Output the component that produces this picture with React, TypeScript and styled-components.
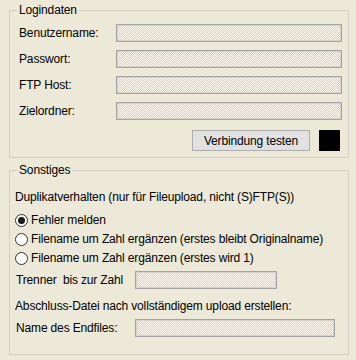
import styled, { createGlobalStyle } from 'styled-components';

const GlobalStyle = createGlobalStyle`
  html, body {
    margin: 0;
    background: #ece9d8;
  }
  body {
    font-family: 'Liberation Sans', Arial, sans-serif;
    font-size: 12px;
    letter-spacing: -0.15px;
    color: #000;
  }
`;

const App = () => {
  return (
    <>
      <GlobalStyle />
      <Page>
        <Group>
          <Legend>Logindaten</Legend>
          <FormGrid>
            <Label>Benutzername:</Label>
            <TextField />
            <Label>Passwort:</Label>
            <TextField type='password' />
            <Label>FTP Host:</Label>
            <TextField />
            <Label>Zielordner:</Label>
            <TextField />
          </FormGrid>
          <ButtonRow>
            <Button type='button'>Verbindung testen</Button>
            <StatusBox />
          </ButtonRow>
        </Group>

        <Group $tight>
          <Legend $shift>Sonstiges</Legend>
          <Text>Duplikatverhalten (nur für Fileupload, nicht (S)FTP(S))</Text>
          <RadioList>
            <RadioRow>
              <Radio $checked />
              Fehler melden
            </RadioRow>
            <RadioRow>
              <Radio />
              Filename um Zahl ergänzen (erstes bleibt Originalname)
            </RadioRow>
            <RadioRow>
              <Radio />
              Filename um Zahl ergänzen (erstes wird 1)
            </RadioRow>
          </RadioList>
          <FieldRow>
            <RowLabel>Trenner  bis zur Zahl</RowLabel>
            <TextField $width={142} />
          </FieldRow>
          <Text $gap={9}>Abschluss-Datei nach vollständigem upload erstellen:</Text>
          <FieldRow>
            <RowLabel>Name des Endfiles:</RowLabel>
            <TextField $width={200} />
          </FieldRow>
        </Group>
      </Page>
    </>
  );
};

export default App;

const Page = styled.div`
  width: 340px;
  padding: 3px 0 0 9px;
  display: flex;
  flex-direction: column;
  gap: 5px;
`;

const Group = styled.fieldset<{ $tight?: boolean }>`
  margin: 0;
  border: 1px solid #d2d0c6;
  padding: ${(p) => (p.$tight ? '0 6px 17px 5px' : '0 6px 6px 9px')};
  min-width: 0;
`;

const Legend = styled.legend<{ $shift?: boolean }>`
  padding: 0 2px;
  margin-left: ${(p) => (p.$shift ? '2px' : '-2px')};
  line-height: 15px;
`;

const FormGrid = styled.div`
  display: grid;
  grid-template-columns: 97px 1fr;
  row-gap: 8px;
  align-items: center;
  margin-top: 6px;
`;

const Label = styled.span`
  line-height: 18px;
`;

const TextField = styled.input<{ $width?: number }>`
  box-sizing: border-box;
  width: ${(p) => (p.$width ? `${p.$width}px` : '100%')};
  height: 18px;
  margin: 0;
  padding: 0;
  border: 1px solid #a3a3a3;
  box-shadow: inset 0 0 0 1px #d8d2c8;
  background: repeating-conic-gradient(#fbc992 0 25%, #fff8ef 0 50%) 0 0 / 2px 2px;
  outline: none;
`;

const ButtonRow = styled.div`
  display: flex;
  justify-content: flex-end;
  align-items: center;
  gap: 9px;
  margin: 10px 2px 0 0;
`;

const Button = styled.button`
  box-sizing: border-box;
  width: 118px;
  height: 21px;
  padding: 0;
  border: 1px solid #adadad;
  background: #e1e1e1;
  font-family: inherit;
  font-size: 12px;
  letter-spacing: inherit;
  color: #000;
`;

const StatusBox = styled.div`
  width: 21px;
  height: 21px;
  background: #000;
`;

const Text = styled.div<{ $gap?: number }>`
  line-height: 16px;
  margin-top: ${(p) => p.$gap ?? 11}px;
  white-space: nowrap;
`;

const RadioList = styled.div`
  display: flex;
  flex-direction: column;
  gap: 3px;
  margin-top: 7px;
`;

const RadioRow = styled.label`
  display: flex;
  align-items: center;
  gap: 3px;
  line-height: 16px;
  white-space: nowrap;
`;

const Radio = styled.span<{ $checked?: boolean }>`
  box-sizing: border-box;
  width: 13px;
  height: 13px;
  border-radius: 50%;
  border: 1px solid #333;
  background: #fff;
  display: flex;
  align-items: center;
  justify-content: center;

  &::after {
    content: '';
    width: 7px;
    height: 7px;
    border-radius: 50%;
    background: ${(p) => (p.$checked ? '#1a1a1a' : 'transparent')};
  }
`;

const FieldRow = styled.div`
  display: flex;
  align-items: center;
  margin-top: 5px;
`;

const RowLabel = styled.span`
  width: 119px;
  padding-left: 1px;
  white-space: pre;
`;
